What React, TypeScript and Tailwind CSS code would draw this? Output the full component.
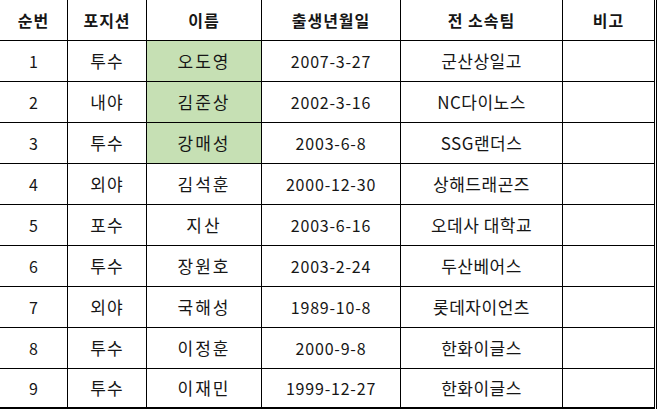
const players = [
  { no: 1, pos: "투수", name: "오도영", birth: "2007-3-27", team: "군산상일고", mark: true },
  { no: 2, pos: "내야", name: "김준상", birth: "2002-3-16", team: "NC다이노스", mark: true },
  { no: 3, pos: "투수", name: "강매성", birth: "2003-6-8", team: "SSG랜더스", mark: true },
  { no: 4, pos: "외야", name: "김석훈", birth: "2000-12-30", team: "상해드래곤즈" },
  { no: 5, pos: "포수", name: "지산", birth: "2003-6-16", team: "오데사 대학교" },
  { no: 6, pos: "투수", name: "장원호", birth: "2003-2-24", team: "두산베어스" },
  { no: 7, pos: "외야", name: "국해성", birth: "1989-10-8", team: "롯데자이언츠" },
  { no: 8, pos: "투수", name: "이정훈", birth: "2000-9-8", team: "한화이글스" },
  { no: 9, pos: "투수", name: "이재민", birth: "1999-12-27", team: "한화이글스" },
]

const headers = ["순번", "포지션", "이름", "출생년월일", "전 소속팀", "비고"]

const cols = "grid grid-cols-[68px_79px_115px_139px_162px_92px]"
const cell = "flex items-center justify-center border-r border-b border-black"

export default function App() {
  return (
    <div
      className="w-[658px] h-[409px] bg-white text-[#161616] overflow-hidden"
      style={{ fontFamily: '"Noto Sans CJK KR", "Noto Sans", sans-serif' }}
    >
      <div className="w-[657px] border-r border-black">
        <div className={`${cols} h-[41px]`}>
          {headers.map((h) => (
            <div key={h} className={`${cell} text-[16px] font-bold tracking-[1px]`}>
              {h}
            </div>
          ))}
        </div>
        {players.map((p, i) => (
          <div
            key={p.no}
            className={`${cols} ${i === players.length - 1 ? "h-[40px] [&>div]:border-b-2" : "h-[41px]"} text-[17px]`}
          >
            <div className={`${cell} text-[16px]`}>{p.no}</div>
            <div className={`${cell} tracking-[1px]`}>{p.pos}</div>
            <div className={`${cell} tracking-[2px] ${p.mark ? "bg-[#c6e0b4]" : ""}`}>{p.name}</div>
            <div className={`${cell} text-[16px] tracking-[0.8px]`}>{p.birth}</div>
            <div className={`${cell} tracking-[0.5px]`}>{p.team}</div>
            <div className={cell}></div>
          </div>
        ))}
      </div>
    </div>
  )
}
